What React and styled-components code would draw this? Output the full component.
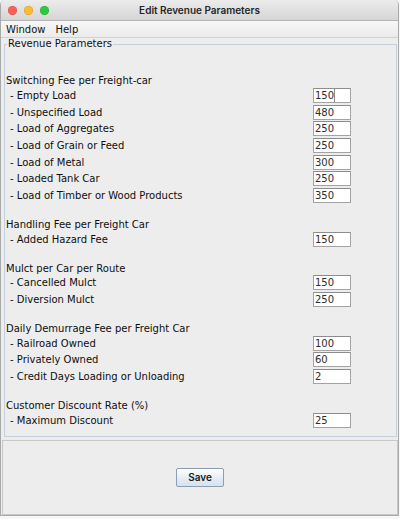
import React from "react";
import styled, { createGlobalStyle } from "styled-components";

const GlobalStyle = createGlobalStyle`
  html, body {
    margin: 0;
    padding: 0;
    background: #f7f7f7;
  }
  body {
    font-family: "DejaVu Sans", sans-serif;
  }
`;

const sections = [
  {
    title: "Switching Fee per Freight-car",
    items: [
      ["Empty Load", "150"],
      ["Unspecified Load", "480"],
      ["Load of Aggregates", "250"],
      ["Load of Grain or Feed", "250"],
      ["Load of Metal", "300"],
      ["Loaded Tank Car", "250"],
      ["Load of Timber or Wood Products", "350"],
    ],
  },
  {
    title: "Handling Fee per Freight Car",
    items: [["Added Hazard Fee", "150"]],
  },
  {
    title: "Mulct per Car per Route",
    items: [
      ["Cancelled Mulct", "150"],
      ["Diversion Mulct", "250"],
    ],
  },
  {
    title: "Daily Demurrage Fee per Freight Car",
    items: [
      ["Railroad Owned", "100"],
      ["Privately Owned", "60"],
      ["Credit Days Loading or Unloading", "2"],
    ],
  },
  {
    title: "Customer Discount Rate (%)",
    items: [["Maximum Discount", "25"]],
  },
];

const Window = styled.div`
  width: 399px;
  height: 516px;
  box-sizing: border-box;
  background: #ededed;
  border: 1px solid #a9a9a9;
  border-top: none;
  border-radius: 5px 5px 0 0;
  overflow: hidden;
  display: flex;
  flex-direction: column;
`;

const TitleBar = styled.div`
  height: 21px;
  box-sizing: border-box;
  display: grid;
  grid-template-columns: 1fr auto 1fr;
  align-items: center;
  padding: 0 7px;
  background: linear-gradient(#ececec, #d5d5d5);
  border-bottom: 1px solid #b3b3b3;
`;

const Lights = styled.div`
  display: flex;
  gap: 7px;
`;

const Light = styled.span`
  width: 9px;
  height: 9px;
  border-radius: 50%;
  background: ${(p) => p.$color};
  box-shadow: inset 0 0 0 0.5px rgba(0, 0, 0, 0.18);
`;

const Title = styled.div`
  font-family: Inter, sans-serif;
  font-weight: 600;
  font-size: 10px;
  color: #262626;
`;

const MenuBar = styled.div`
  height: 17px;
  box-sizing: border-box;
  display: flex;
  align-items: center;
  gap: 10px;
  padding-left: 5px;
  background: linear-gradient(#f7f7f7, #ebebeb);
  border-bottom: 1px solid #d2d2d2;
  font-size: 10px;
  color: #111;
`;

const Group = styled.fieldset`
  margin: 0 1px 0 3px;
  padding: 24px 1px 0 1px;
  height: 399px;
  box-sizing: border-box;
  border: 1px solid #c4d0dc;
  min-width: 0;

  legend {
    margin-left: 1px;
    padding: 0 1px;
    font-size: 10px;
    line-height: 12px;
    color: #111;
  }
`;

const Section = styled.div`
  & + & {
    margin-top: 14px;
  }
`;

const Header = styled.div`
  height: 13px;
  line-height: 13px;
  font-size: 10px;
  color: #0d0d0d;
  white-space: nowrap;
`;

const Row = styled.div`
  display: grid;
  grid-template-columns: 1fr 38px;
  align-items: center;
  height: 16.7px;
  padding-right: 44px;
`;

const Label = styled.div`
  padding-left: 4px;
  font-size: 10px;
  line-height: 13px;
  color: #0d0d0d;
  white-space: nowrap;
`;

const FieldWrap = styled.div`
  position: relative;
  height: 15px;
`;

const Field = styled.input`
  display: block;
  width: 38px;
  height: 15px;
  box-sizing: border-box;
  margin: 0;
  padding: 0 0 0 1px;
  border: 1px solid #a3a3a3;
  border-top-color: #8c8c8c;
  background: #fff;
  font-family: "DejaVu Sans", sans-serif;
  font-size: 10px;
  color: #2c2c2c;
  outline: none;
`;

const Caret = styled.span`
  position: absolute;
  left: 21px;
  top: 1px;
  width: 1px;
  height: 13px;
  background: #8a8a8a;
`;

const ButtonPanel = styled.div`
  flex: 1;
  margin: 3px 0 0 1px;
  border: 1px solid #c8c8c8;
  display: flex;
  align-items: center;
  justify-content: center;
`;

const Button = styled.button`
  width: 48px;
  height: 19px;
  margin: 0 0 1px 0;
  padding: 0;
  border: 1px solid #8e9db0;
  border-radius: 2px;
  background: linear-gradient(#ffffff, #e4ecf5 55%, #d6e2ee);
  font-family: Inter, sans-serif;
  font-weight: 600;
  font-size: 10px;
  color: #1a1a1a;
`;

export default function App() {
  return (
    <>
      <GlobalStyle />
      <Window>
        <TitleBar>
          <Lights>
            <Light $color="#fc5f57" />
            <Light $color="#fdbb2e" />
            <Light $color="#2ac940" />
          </Lights>
          <Title>Edit Revenue Parameters</Title>
          <div />
        </TitleBar>
        <MenuBar>
          <span>Window</span>
          <span>Help</span>
        </MenuBar>
        <Group>
          <legend>Revenue Parameters</legend>
          {sections.map((s, si) => (
            <Section key={s.title}>
              <Header>{s.title}</Header>
              {s.items.map(([label, value], i) => (
                <Row key={label}>
                  <Label>- {label}</Label>
                  <FieldWrap>
                    <Field defaultValue={value} readOnly />
                    {si === 0 && i === 0 && <Caret />}
                  </FieldWrap>
                </Row>
              ))}
            </Section>
          ))}
        </Group>
        <ButtonPanel>
          <Button>Save</Button>
        </ButtonPanel>
      </Window>
    </>
  );
}
